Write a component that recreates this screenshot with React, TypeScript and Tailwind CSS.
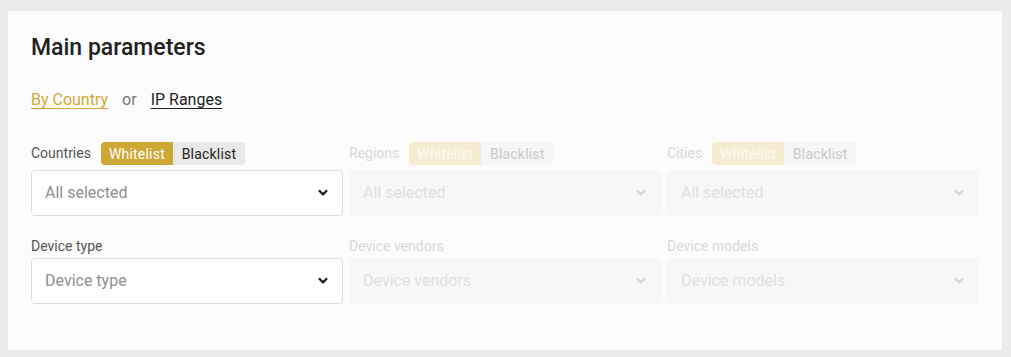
const FONT = { fontFamily: "Roboto, 'Noto Sans', sans-serif" };

function Chevron({ muted }: { muted?: boolean }) {
  return (
    <svg width="10" height="8" viewBox="0 0 10 8" className="shrink-0">
      <path
        d="M1.6 2 L5 5.4 L8.4 2"
        fill="none"
        stroke={muted ? "#d6d6d6" : "#1f1f1f"}
        strokeWidth="2.3"
        strokeLinecap="round"
        strokeLinejoin="round"
      />
    </svg>
  );
}

function Toggle({ muted }: { muted?: boolean }) {
  return (
    <div className="flex h-[23px] rounded-[4px] overflow-hidden text-[14px] leading-none tracking-[0.2px]">
      <span
        className={`w-[72px] flex items-center justify-center ${
          muted ? "bg-[#f6ecd2] text-[#fdfaf2]" : "bg-[#cfa734] text-white"
        }`}
      >
        Whitelist
      </span>
      <span
        className={`w-[72px] flex items-center justify-center ${
          muted ? "bg-[#f6f6f6] text-[#cacaca]" : "bg-[#e9e9e9] text-[#222]"
        }`}
      >
        Blacklist
      </span>
    </div>
  );
}

function Select({ value, muted }: { value: string; muted?: boolean }) {
  return (
    <div
      className={`h-[46px] rounded-[4px] flex items-center justify-between pl-[13px] pr-[14px] ${
        muted ? "bg-[#f7f7f7] border border-[#f7f7f7]" : "bg-white border border-[#dcdcdc]"
      }`}
    >
      <span className={`text-[16px] ${muted ? "text-[#e0e0e0]" : "text-[#8f8f8f]"}`}>{value}</span>
      <Chevron muted={muted} />
    </div>
  );
}

function Field({
  label,
  value,
  toggle,
  muted,
}: {
  label: string;
  value: string;
  toggle?: boolean;
  muted?: boolean;
}) {
  return (
    <div className={`flex flex-col ${toggle ? "gap-[5px]" : "gap-[3px]"}`}>
      <div className={`flex items-center gap-[10px] ${toggle ? "h-[23px]" : "h-[18px]"}`}>
        <span className={`text-[14px] ${muted ? "text-[#d9d9d9]" : "text-[#555]"}`}>{label}</span>
        {toggle && <Toggle muted={muted} />}
      </div>
      <Select value={value} muted={muted} />
    </div>
  );
}

export default function App() {
  return (
    <div className="w-[1011px] h-[357px] bg-[#ebebeb] pt-[11px] pl-[8px] pr-[9px] pb-[7px]" style={FONT}>
      <div className="h-full bg-[#fcfcfc] px-[23px] pt-[23px]">
        <h2 className="text-[23px] font-medium text-[#222] leading-[28px]">Main parameters</h2>

        <div className="flex items-center gap-[14px] mt-[28px] text-[16px] leading-[20px]">
          <a className="text-[#d2a83a] underline underline-offset-[3px]">By Country</a>
          <span className="text-[#777]">or</span>
          <a className="text-[#222] underline underline-offset-[3px]">IP Ranges</a>
        </div>

        <div className="grid grid-cols-3 gap-x-[6px] gap-y-[21px] mt-[32px]">
          <Field label="Countries" value="All selected" toggle />
          <Field label="Regions" value="All selected" toggle muted />
          <Field label="Cities" value="All selected" toggle muted />
          <Field label="Device type" value="Device type" />
          <Field label="Device vendors" value="Device vendors" muted />
          <Field label="Device models" value="Device models" muted />
        </div>
      </div>
    </div>
  );
}
